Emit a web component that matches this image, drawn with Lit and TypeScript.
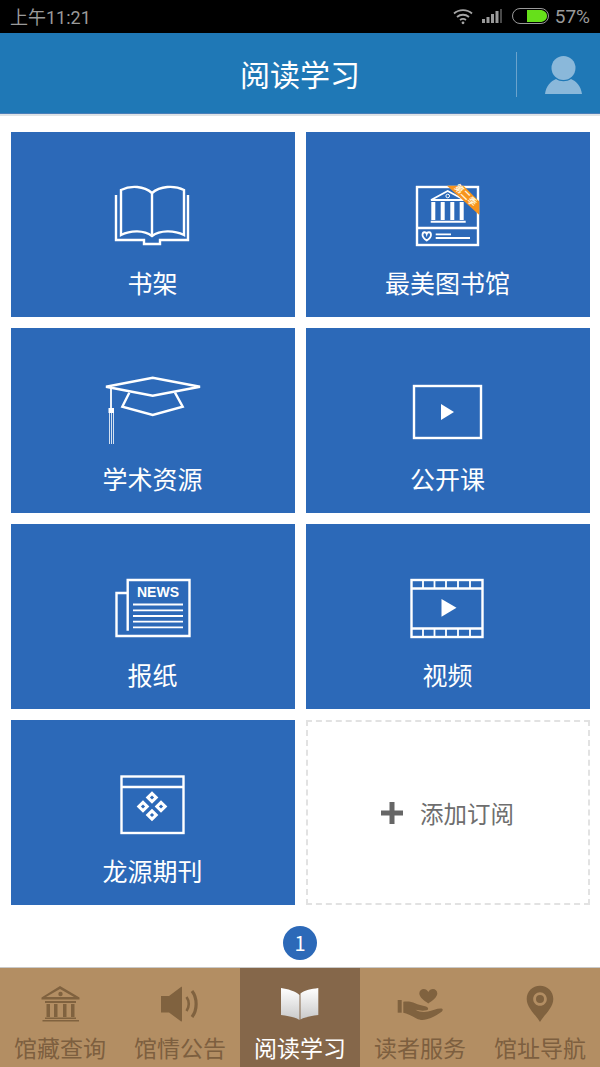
import { LitElement, css, html, svg, unsafeCSS } from 'lit';
import { customElement } from 'lit/decorators.js';
import { classMap } from 'lit/directives/class-map.js';

const CJK = unsafeCSS(`"Noto Sans CJK SC", "Liberation Sans", sans-serif`);

// Tile icons share a 100x80 box centred in the tile.
const bookIcon = svg`
  <path d="M13 19V64H41V68H57V64H85V19" />
  <path d="M18 14C28 9 41 10 49 17C57 10 71 9 81 14V59C71 54 57 54 49 60C41 54 28 54 18 59Z" />
  <path d="M49 17V60" />
`;

const libraryIcon = svg`
  <rect x="19" y="11" width="61" height="58" />
  <path d="M19 52H80" />
  <path d="M33 24L49.700 15L66.500 24Z" stroke-width="1.8" />
  <circle cx="49.700" cy="20" r="1.800" stroke-width="1" />
  <path d="M35.300 26V44M44.700 26V44M54.300 26V44M63.700 26V44" stroke-width="4" />
  <path d="M32.700 45.700H67.700" stroke-width="2" />
  <path d="M24.500 59C24.500 55.500 28 55.500 28.700 58C29.500 55.500 33 55.500 33 59C33 61 31 63 28.700 64.500C26.500 63 24.500 61 24.500 59Z" stroke-width="1.800" />
  <path d="M37.700 58.300H53M37.700 62H72" stroke-width="1.800" />
  <polygon class="fill-orange" points="49,9.700 65.500,9.700 81.300,25.500 81.300,39" />
  <text class="ribbon" x="0" y="0" transform="translate(65.500 21.500) rotate(44)">第二季</text>
`;

const capIcon = svg`
  <path d="M3 14.700L49.700 5.700L97 14.700L49.700 23.700Z" />
  <path d="M26.300 20.700L19.300 34.700L49.700 43L79.700 34.700L72 20.700" />
  <path d="M8 15V37" stroke-width="1.800" />
  <rect class="fill" x="5.500" y="36" width="5.500" height="5" stroke="none" />
  <path d="M6.500 41V72M8.500 41V72M10.500 41V72" stroke-width="1" opacity="0.8" />
`;

const lectureIcon = svg`
  <rect x="16" y="14" width="67" height="52" />
  <polygon class="fill" points="43,32 56,40 43,48" stroke="none" />
`;

const newsIcon = svg`
  <path d="M24.700 62.700V12H86.500V68H13.500V25H24.700" />
  <text class="news" x="55" y="29" text-anchor="middle">NEWS</text>
  <path d="M30 36.500H80M30 42.300H80M30 48H80M30 53.700H80M30 59.300H80" stroke-width="1.800" />
`;

const filmIcon = svg`
  <rect x="13.500" y="12" width="71" height="57" />
  <path d="M13.500 20.500H84.500M13.500 60.500H84.500" />
  <path d="M25 12V20M36.500 12V20M48 12V20M60 12V20M72 12V20M25 60.500V69M36.500 60.500V69M48 60.500V69M60 60.500V69M72 60.500V69" stroke-width="1.800" />
  <polygon class="fill" points="43.500,31 58.500,39.700 43.500,48.700" stroke="none" />
`;

const journalIcon = svg`
  <rect x="18.500" y="12.500" width="62" height="56.500" />
  <path d="M18.500 23H80.500" />
  <g stroke-width="3">
    <rect x="46" y="30.500" width="6" height="6" transform="rotate(45 49 33.500)" />
    <rect x="46" y="48" width="6" height="6" transform="rotate(45 49 51)" />
    <rect x="37" y="39.500" width="6" height="6" transform="rotate(45 40 42.500)" />
    <rect x="55" y="39.500" width="6" height="6" transform="rotate(45 58 42.500)" />
  </g>
`;

// Tab icons are drawn in a 120x40 box, the full width of a tab.
const templeTab = svg`
  <path d="M41.500 13.500L60 2L79.500 13.500V15.500H41.500ZM46 13H74L60 5Z" fill-rule="evenodd" />
  <circle cx="60.500" cy="10" r="2.200" />
  <path d="M45 17H76V19H45ZM46.500 20H50V33H46.500ZM54 20H57.500V33H54ZM63 20H66.500V33H63ZM71 20H74.500V33H71ZM45 33.500H76V35H45ZM42.500 36H79V37.500H42.500Z" />
`;

const speakerTab = svg`
  <path d="M41 12H49L61 3C62 2.500 62 3 62 4V36C62 37.500 61.500 38 60.500 37L49 28.500H41Z" />
  <path d="M66.500 13C69.500 17 69.500 23 66.500 27" class="line" stroke-width="2.600" />
  <path d="M72 7C77.500 14 77.500 26 72 33" class="line" stroke-width="3.200" />
`;

const openBookTab = svg`
  <defs>
    <linearGradient id="page" x1="0" y1="0" x2="0" y2="1">
      <stop offset="0" stop-color="#ffffff" />
      <stop offset="1" stop-color="#c9c9c9" />
    </linearGradient>
  </defs>
  <path fill="url(#page)" d="M41 4C48 5 55 7 59.500 11V36C55 33 48 32 41 31Z" />
  <path fill="url(#page)" d="M78.300 4C71 5 65 6 60.500 9.500V35.500C65 33 71 32 78.300 31Z" />
`;

const handTab = svg`
  <path d="M68.300 19.500C64 16.500 59.300 13 59.300 9.500C59.300 6.500 61.500 5 63.700 5C65.700 5 67.300 6 68.300 8C69.300 6 71 5 73 5C75.200 5 77.300 6.500 77.300 9.500C77.300 13 72.700 16.500 68.300 19.500Z" />
  <path d="M37.700 16H41.700V28.700H37.700Z" />
  <path d="M43.300 17.700C47 17 52 17.500 55 19.300C58 21 62 21.500 66 22.500C68.500 23.200 69 25.700 66.500 26.300C63 27 59 26.500 55.500 25.800C59 28 64 28.500 68 27.500C72 26.500 78 24 81.500 24.500C83.200 25 83 26.500 81.700 27.700C77 31 72 34 66.700 35.300C63 36.300 60 36.300 56.500 34.500C52 32 47 29.500 43.300 28.700Z" />
`;

const pinTab = svg`
  <path fill-rule="evenodd" d="M60 38C56 31 46.700 24 46.700 15C46.700 7.500 52.500 1.700 60 1.700C67.500 1.700 73.300 7.500 73.300 15C73.300 24 64 31 60 38ZM60 8.200C56.200 8.200 53.200 11.200 53.200 15C53.200 18.800 56.200 21.800 60 21.800C63.800 21.800 66.800 18.800 66.800 15C66.800 11.200 63.800 8.200 60 8.200Z" />
  <circle cx="60" cy="15" r="4" />
`;

const TILES = [
  { label: '书架', icon: bookIcon },
  { label: '最美图书馆', icon: libraryIcon },
  { label: '学术资源', icon: capIcon },
  { label: '公开课', icon: lectureIcon },
  { label: '报纸', icon: newsIcon },
  { label: '视频', icon: filmIcon },
  { label: '龙源期刊', icon: journalIcon },
];

const TABS = [
  { label: '馆藏查询', icon: templeTab },
  { label: '馆情公告', icon: speakerTab },
  { label: '阅读学习', icon: openBookTab, active: true },
  { label: '读者服务', icon: handTab },
  { label: '馆址导航', icon: pinTab },
];

@customElement('app-root')
export class AppRoot extends LitElement {
  static styles = css`
    :host {
      display: flex;
      flex-direction: column;
      width: 600px;
      height: 1067px;
      overflow: hidden;
      background: #ffffff;
      font-family: ${CJK};
    }

    .status {
      display: flex;
      align-items: center;
      justify-content: space-between;
      height: 33px;
      padding: 0 10px 1px;
      box-sizing: border-box;
      background: #000000;
      color: #9a9a9a;
      font-family: Roboto, ${CJK};
      font-size: 18px;
    }

    .status-right {
      display: flex;
      align-items: center;
    }

    .wifi {
      margin-right: 9px;
    }

    .signal {
      margin-right: 10px;
    }

    .battery {
      margin-right: 6px;
    }

    .percent {
      font-size: 19px;
    }

    .header {
      display: flex;
      align-items: center;
      justify-content: center;
      position: relative;
      height: 80px;
      background: #1f78b6;
      border-bottom: 1px solid #4a7fb9;
      box-shadow: 0 2px 0 #dfe3e6;
      color: #ffffff;
      font-size: 30px;
    }

    .header-actions {
      position: absolute;
      top: 19px;
      right: 0;
      display: flex;
      align-items: center;
      width: 83px;
      height: 45px;
      border-left: 1px solid #6ba3cc;
    }

    .header-actions svg {
      margin-left: 28px;
    }

    .main {
      flex: 1;
      display: flex;
      flex-direction: column;
      align-items: center;
      padding-top: 18px;
    }

    .grid {
      display: grid;
      grid-template-columns: 284px 284px;
      grid-auto-rows: 185px;
      gap: 11px;
    }

    .tile {
      display: flex;
      flex-direction: column;
      align-items: center;
      padding-top: 44px;
      box-sizing: border-box;
      background: #2c69b8;
      color: #ffffff;
      font-size: 25px;
    }

    .tile svg {
      display: block;
      fill: none;
      stroke: #ffffff;
      stroke-width: 2.4;
    }

    .tile .fill {
      fill: #ffffff;
    }

    .tile .fill-orange {
      fill: #f7941d;
      stroke: none;
    }

    .tile .ribbon {
      fill: #fff3d6;
      stroke: none;
      font-size: 9px;
      font-weight: 700;
      text-anchor: middle;
    }

    .tile .news {
      fill: #ffffff;
      stroke: none;
      font-family: 'Liberation Sans', sans-serif;
      font-size: 14px;
      font-weight: 700;
    }

    .tile-label {
      margin-top: 10px;
      line-height: 32px;
    }

    .add {
      display: flex;
      align-items: center;
      justify-content: center;
      gap: 17px;
      box-sizing: border-box;
      border: 2px dashed #e2e2e2;
      color: #6e6e6e;
      font-size: 23.5px;
    }

    .add svg {
      fill: #666666;
    }

    .pager {
      width: 34px;
      height: 34px;
      margin-top: 21px;
      border-radius: 50%;
      background: #2c69b8;
      color: #ffffff;
      font-size: 20px;
      line-height: 34px;
      text-align: center;
    }

    .tabs {
      display: flex;
      height: 99px;
      background: #b38e63;
      box-shadow: 0 -1px 0 #c9c9c9;
    }

    .tab {
      flex: 1;
      display: flex;
      flex-direction: column;
      align-items: center;
      padding-top: 16px;
      box-sizing: border-box;
      color: #7d5f3f;
      font-size: 23px;
    }

    .tab svg {
      display: block;
      fill: #80623f;
    }

    .tab .line {
      fill: none;
      stroke: #80623f;
    }

    .tab.active {
      background: #85674a;
      color: #ffffff;
    }

    .tab-label {
      margin-top: 7px;
      line-height: 32px;
    }
  `;

  renderStatusBar() {
    return html`
      <div class="status">
        <span>上午11:21</span>
        <div class="status-right">
          <svg class="wifi" width="20" height="17" viewBox="0 0 20 17" fill="none" stroke="#a6a6a6" stroke-width="1.8">
            <path d="M1 5.500C6 1 14 1 19 5.500" />
            <path d="M4 9C7.500 6 12.500 6 16 9" />
            <path d="M7 12C8.800 10.700 11.200 10.700 13 12" />
            <circle cx="10" cy="14.800" r="1.400" fill="#a6a6a6" stroke="none" />
          </svg>
          <svg class="signal" width="20" height="15" viewBox="0 0 20 15" fill="#9a9a9a">
            <rect x="0" y="10" width="3" height="4" />
            <rect x="4.500" y="8" width="3" height="6" />
            <rect x="9" y="5" width="3" height="9" />
            <rect x="13.500" y="2" width="3" height="12" />
            <rect x="18" y="0" width="2" height="14" fill="#4a4a4a" />
          </svg>
          <svg class="battery" width="37" height="16" viewBox="0 0 37 16">
            <rect x="0.500" y="0.500" width="36" height="15" rx="7.500" fill="none" stroke="#9a9a9a" />
            <path d="M15 2H28C32 2 35 4.500 35 8C35 11.500 32 14 28 14H15Z" fill="#66e01a" />
          </svg>
          <span class="percent">57%</span>
        </div>
      </div>
    `;
  }

  renderHeader() {
    return html`
      <div class="header">
        阅读学习
        <div class="header-actions">
          <svg width="38" height="38" viewBox="0 0 38 38" fill="#8ab8da">
            <circle cx="18.500" cy="12" r="12" />
            <path d="M0 38C1 30 6 25 11 23C15 26 22 26 26 23C31 25 36 30 37 38Z" />
          </svg>
        </div>
      </div>
    `;
  }

  render() {
    return html`
      ${this.renderStatusBar()} ${this.renderHeader()}
      <div class="main">
        <div class="grid">
          ${TILES.map(
            (tile) => html`
              <div class="tile">
                <svg width="100" height="80" viewBox="0 0 100 80">${tile.icon}</svg>
                <div class="tile-label">${tile.label}</div>
              </div>
            `,
          )}
          <div class="add">
            <svg width="22" height="22" viewBox="0 0 22 22">
              <path d="M8.500 0H13.500V8.500H22V13.500H13.500V22H8.500V13.500H0V8.500H8.500Z" />
            </svg>
            添加订阅
          </div>
        </div>
        <div class="pager">1</div>
      </div>
      <div class="tabs">
        ${TABS.map(
          (tab) => html`
            <div class="tab ${classMap({ active: !!tab.active })}">
              <svg width="120" height="40" viewBox="0 0 120 40">${tab.icon}</svg>
              <div class="tab-label">${tab.label}</div>
            </div>
          `,
        )}
      </div>
    `;
  }
}
